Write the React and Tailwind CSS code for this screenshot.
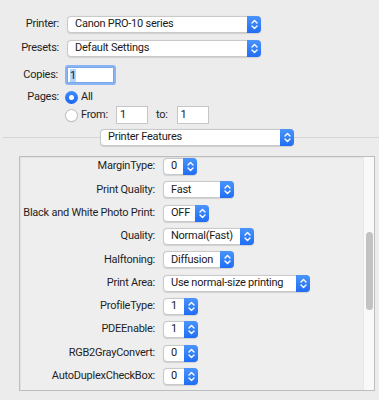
import React from 'react'

function Arrows() {
  return (
    <svg width="9" height="13" viewBox="0 0 9 13" fill="none" stroke="white" strokeWidth="1.4" strokeLinecap="round" strokeLinejoin="round">
      <path d="M2 5 L4.5 2.5 L7 5" />
      <path d="M2 8 L4.5 10.5 L7 8" />
    </svg>
  )
}

function Popup({ value, width }) {
  return (
    <div
      className="flex h-[17px] items-stretch rounded-[4px] border border-[#c9c9c9] bg-white shadow-[0_0.5px_1px_rgba(0,0,0,0.12)]"
      style={{ width }}
    >
      <div className="flex flex-1 items-center overflow-hidden whitespace-nowrap pl-[7px] text-[#1a1a1a]">{value}</div>
      <div className="-my-px -mr-px flex w-[14px] shrink-0 items-center justify-center rounded-r-[4px] bg-gradient-to-b from-[#4a94fd] to-[#1f6df3]">
        <Arrows />
      </div>
    </div>
  )
}

function FeatureRow({ label, value, width }) {
  return (
    <div className="flex h-[23.3px] items-center">
      <div className="flex w-[135px] shrink-0 justify-end whitespace-nowrap">{label}</div>
      <div className="ml-[8px]">
        <Popup value={value} width={width} />
      </div>
    </div>
  )
}

function Radio({ checked }) {
  return checked ? (
    <div className="flex h-[13px] w-[13px] items-center justify-center rounded-full bg-gradient-to-b from-[#3f8bfc] to-[#1a66ee]">
      <div className="h-[5px] w-[5px] rounded-full bg-white" />
    </div>
  ) : (
    <div className="h-[13px] w-[13px] rounded-full border border-[#bdbdbd] bg-white shadow-[0_0.5px_1px_rgba(0,0,0,0.1)]" />
  )
}

function Field({ value, width }) {
  return (
    <div className="flex h-[18px] items-center border border-[#c6c6c6] bg-white pl-[3px] text-[#1a1a1a]" style={{ width }}>
      {value}
    </div>
  )
}

const features = [
  ['MarginType:', '0', 34],
  ['Print Quality:', 'Fast', 71],
  ['Black and White Photo Print:', 'OFF', 46],
  ['Quality:', 'Normal(Fast)', 91],
  ['Halftoning:', 'Diffusion', 71],
  ['Print Area:', 'Use normal-size printing', 147],
  ['ProfileType:', '1', 35],
  ['PDEEnable:', '1', 35],
  ['RGB2GrayConvert:', '0', 35],
  ['AutoDuplexCheckBox:', '0', 35],
]

export default function App() {
  return (
    <div className="h-[400px] w-[379px] overflow-hidden bg-[#ececec] font-['Roboto','Liberation_Sans',sans-serif] text-[11px] tracking-[-0.25px] text-[#1f1f1f]">
      <div className="pt-[16px]">
        <div className="flex h-[17px] items-center">
          <div className="w-[59px] text-right">Printer:</div>
          <div className="ml-[8px]">
            <Popup value="Canon PRO-10 series" width={194} />
          </div>
        </div>
        <div className="mt-[7px] flex h-[17px] items-center">
          <div className="w-[59px] text-right">Presets:</div>
          <div className="ml-[8px]">
            <Popup value="Default Settings" width={194} />
          </div>
        </div>
        <div className="mt-[8px] flex h-[20px] items-center">
          <div className="w-[58px] text-right">Copies:</div>
          <div className="ml-[7px] h-[20px] w-[51px] rounded-[3px] bg-[#8ab4f3] p-[2px]">
            <div className="flex h-[16px] items-center border border-[#7aa7ea] bg-white pl-[2px] text-[#1a1a1a]">
              <span className="bg-[#b3d4fc] leading-[13px]">1</span>
            </div>
          </div>
        </div>
        <div className="mt-[4px] flex h-[16px] items-center">
          <div className="w-[59px] text-right">Pages:</div>
          <div className="ml-[6px] flex items-center">
            <Radio checked />
            <span className="ml-[3px]">All</span>
          </div>
        </div>
        <div className="mt-[1px] flex h-[18px] items-center">
          <div className="ml-[65px] flex items-center">
            <Radio />
            <span className="ml-[3px]">From:</span>
          </div>
          <div className="ml-[8px]">
            <Field value="1" width={32} />
          </div>
          <span className="ml-[8px]">to:</span>
          <div className="ml-[9px]">
            <Field value="1" width={32} />
          </div>
        </div>
      </div>

      <div className="relative mt-[5px] h-[17px]">
        <div className="absolute left-[3px] right-0 top-[8px] border-t border-[#d6d6d6]" />
        <div className="relative ml-[100px]">
          <Popup value="Printer Features" width={194} />
        </div>
      </div>

      <div className="ml-[19px] mt-[10px] flex h-[235px] w-[356px] overflow-hidden border border-[#bdbdbd] bg-[#eeeeee] shadow-[inset_1px_1px_0_#e2e2e2]">
        <div className="-mt-[2px] flex-1">
          {features.map(([label, value, width]) => (
            <FeatureRow key={label} label={label} value={value} width={width} />
          ))}
        </div>
        <div className="relative w-[11px] border-l border-[#e8e8e8] bg-[#f9f9f9]">
          <div className="absolute left-[2px] top-[75px] h-[78px] w-[7px] rounded-full bg-[#c2c2c2]" />
        </div>
      </div>
    </div>
  )
}
